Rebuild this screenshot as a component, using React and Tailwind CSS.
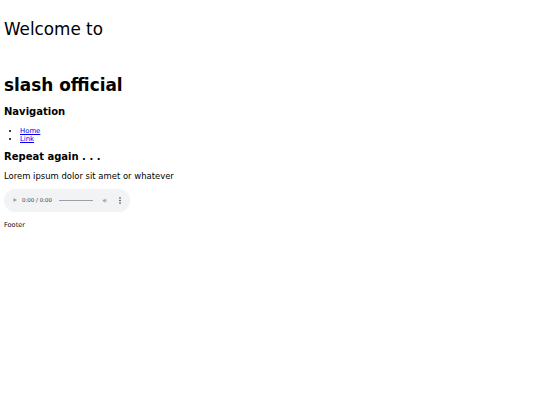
export default function App() {
  return (
    <div className="min-h-[405px] bg-white px-[4px] text-black" style={{ fontFamily: '"DejaVu Sans", sans-serif' }}>
      <div className="pt-[19px] text-[16.8px] leading-[20px]">Welcome to</div>
      <div className="mt-[36px] text-[16.9px] font-bold leading-[20px]">slash official</div>
      <div className="mt-[11px] text-[10px] font-bold leading-[12px]">Navigation</div>
      <ul className="mt-[9px] list-disc pl-[16px] text-[6.9px] leading-[8px]">
        <li><a href="#" className="text-[#0000ee] underline">Home</a></li>
        <li><a href="#" className="text-[#0000ee] underline">Link</a></li>
      </ul>
      <div className="mt-[8px] text-[10px] font-bold leading-[12px]">Repeat again . . .</div>
      <p className="mt-[7.5px] text-[8.45px] leading-[10px]">Lorem ipsum dolor sit amet or whatever</p>
      <div className="mt-[8px] flex h-[23px] w-[126px] items-center rounded-full bg-[#f1f3f4] pl-[8px] pr-[8px] text-[#5f6368]">
        <svg width="6" height="6" viewBox="0 0 6 6" className="mr-[4px] shrink-0"><path d="M1.5 1 L5 3 L1.5 5 Z" fill="#9aa0a6" /></svg>
        <span className="whitespace-nowrap text-[5.5px] leading-[8px] text-[#3c4043]">0:00 / 0:00</span>
        <div className="ml-[7px] h-[1px] w-[34px] shrink-0 bg-[#9aa0a6]" />
        <svg width="7" height="7" viewBox="0 0 24 24" className="ml-[9px] shrink-0" fill="#9aa0a6">
          <path d="M3 9v6h4l5 5V4L7 9H3zm13.5 3c0-1.770-1.02-3.29-2.5-4.03v8.05c1.48-.73 2.5-2.25 2.5-4.02z" />
        </svg>
        <svg width="6" height="7" viewBox="0 0 6 7" className="ml-[8px] shrink-0" fill="#3c4043">
          <circle cx="3" cy="1" r="0.8" />
          <circle cx="3" cy="3.5" r="0.8" />
          <circle cx="3" cy="6" r="0.8" />
        </svg>
      </div>
      <div className="mt-[9.5px] text-[6.6px] leading-[8px]">Footer</div>
    </div>
  );
}
